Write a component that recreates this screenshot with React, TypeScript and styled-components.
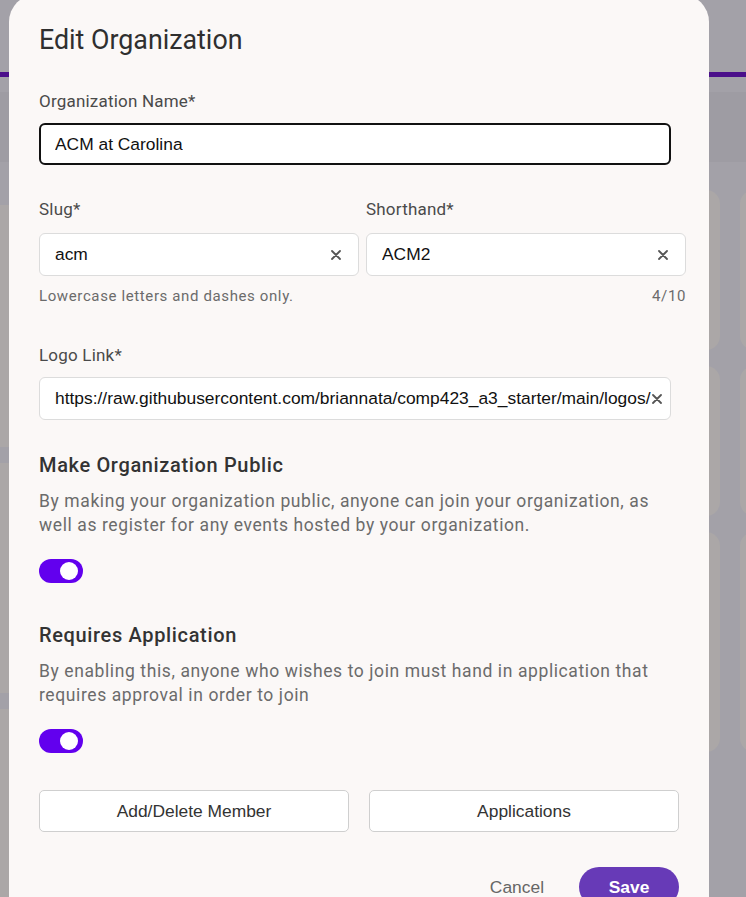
import React from 'react';
import styled, { createGlobalStyle } from 'styled-components';

const GlobalStyle = createGlobalStyle`
  html, body {
    margin: 0;
    padding: 0;
    background: #a3a1a8;
    overflow: hidden;
  }
  * {
    box-sizing: border-box;
  }
`;

/* dimmed page that sits behind the dialog */
const Backdrop = styled.div`
  width: 746px;
  height: 897px;
  overflow: hidden;
  background: #a3a1a8;
`;

const TopBar = styled.div`
  height: 77px;
  border-bottom: 5px solid #4b0f8a;
`;

const Spacer = styled.div`
  height: 15px;
`;

const Band = styled.div`
  height: 70px;
  background: #9e9ca3;
`;

const CardColumns = styled.div`
  display: flex;
  gap: 20px;
  margin-left: -40px;
  align-items: flex-start;
`;

const CardColumn = styled.div<{ $top: number }>`
  width: 370px;
  flex-shrink: 0;
  display: flex;
  flex-direction: column;
  gap: 16px;
  padding-top: ${({ $top }) => $top}px;
`;

const BgCard = styled.div<{ $h: number }>`
  height: ${({ $h }) => $h}px;
  background: #aba7a7;
  border-radius: 14px;
`;

/* modal layer */
const Overlay = styled.div`
  position: fixed;
  inset: 0;
  display: flex;
  align-items: flex-start;
  padding-left: 9px;
`;

const Dialog = styled.div`
  width: 700px;
  margin-top: -6px;
  background: #fbf8f7;
  border-radius: 28px;
  padding: 30px 0 40px 30px;
  font-family: Roboto, 'Noto Sans', Arial, sans-serif;
`;

const Title = styled.h2`
  margin: 0;
  font-size: 26.8px;
  line-height: 32px;
  font-weight: 400;
  color: #2f2f2f;
`;

const Label = styled.div<{ $mt: number }>`
  margin-top: ${({ $mt }) => $mt}px;
  font-size: 17px;
  line-height: 20px;
  letter-spacing: 0.2px;
  color: #4a4a4a;
`;

const InputBox = styled.div<{ $focused?: boolean; $width: number; $mt: number }>`
  position: relative;
  display: flex;
  align-items: center;
  width: ${({ $width }) => $width}px;
  height: ${({ $focused }) => ($focused ? 42 : 43)}px;
  margin-top: ${({ $mt }) => $mt}px;
  background: #fff;
  border: ${({ $focused }) => ($focused ? '2px solid #111' : '1px solid #dcdcdc')};
  border-radius: 6px;
  padding: ${({ $focused }) => ($focused ? '0 14px' : '0 7px 0 15px')};
  overflow: hidden;
`;

const InputText = styled.span`
  font-family: 'Liberation Sans', Arial, sans-serif;
  font-size: 17.4px;
  color: #111;
  white-space: nowrap;
  overflow: hidden;
`;

const ClearButton = styled.span<{ $right: number }>`
  position: absolute;
  right: ${({ $right }) => $right}px;
  top: 50%;
  width: 10px;
  height: 10px;
  margin-top: -5px;
  display: flex;
`;

const FieldRow = styled.div`
  display: grid;
  grid-template-columns: 320px 320px;
  column-gap: 7px;
  margin-top: 34px;
`;

const Hint = styled.div<{ $align?: string }>`
  margin-top: 12px;
  font-size: 15px;
  line-height: 16px;
  letter-spacing: 0.62px;
  color: #6b6b6b;
  text-align: ${({ $align }) => $align || 'left'};
`;

const SectionTitle = styled.div<{ $mt: number }>`
  margin-top: ${({ $mt }) => $mt}px;
  font-size: 20px;
  line-height: 24px;
  font-weight: 500;
  letter-spacing: 0.65px;
  color: #333;
`;

const Description = styled.p`
  margin: 12px 0 0;
  width: 647px;
  font-size: 17.5px;
  line-height: 24px;
  letter-spacing: 0.6px;
  color: #6b6b6b;
`;

const Toggle = styled.div`
  margin-top: 22px;
  width: 44px;
  height: 24px;
  border-radius: 12px;
  background: #6200ee;
  display: flex;
  align-items: center;
  justify-content: flex-end;
  padding-right: 5px;
`;

const Knob = styled.div`
  width: 18px;
  height: 18px;
  border-radius: 50%;
  background: #fff;
`;

const ButtonRow = styled.div`
  display: grid;
  grid-template-columns: 310px 310px;
  column-gap: 20px;
  margin-top: 37px;
`;

const OutlineButton = styled.button`
  height: 42px;
  background: #fff;
  border: 1px solid #cfcfcf;
  border-radius: 5px;
  font-family: 'Liberation Sans', Arial, sans-serif;
  font-size: 17.4px;
  color: #333;
  cursor: pointer;
`;

const Footer = styled.div`
  width: 640px;
  margin-top: 35px;
  display: flex;
  justify-content: flex-end;
  align-items: center;
  gap: 17px;
`;

const TextButton = styled.button`
  background: none;
  border: none;
  padding: 0 18px;
  height: 40px;
  font-family: 'Liberation Sans', Arial, sans-serif;
  font-size: 17.4px;
  color: #666;
  cursor: pointer;
`;

const PrimaryButton = styled.button`
  width: 100px;
  height: 40px;
  border: none;
  border-radius: 20px;
  background: #673ab7;
  color: #fff;
  font-family: 'Liberation Sans', Arial, sans-serif;
  font-size: 17.4px;
  font-weight: 700;
  cursor: pointer;
`;

function ClearIcon({ right }: { right: number }) {
  return (
    <ClearButton $right={right}>
      <svg width="10" height="10" viewBox="0 0 10 10">
        <path d="M1 1 L9 9 M9 1 L1 9" stroke="#555" strokeWidth="1.8" strokeLinecap="round" />
      </svg>
    </ClearButton>
  );
}

export default function App() {
  return (
    <>
      <GlobalStyle />
      <Backdrop>
        <TopBar />
        <Spacer />
        <Band />
        <CardColumns>
          <CardColumn $top={43}>
            <BgCard $h={242} />
            <BgCard $h={230} />
            <BgCard $h={220} />
          </CardColumn>
          <CardColumn $top={28}>
            <BgCard $h={160} />
            <BgCard $h={150} />
            <BgCard $h={220} />
          </CardColumn>
          <CardColumn $top={28}>
            <BgCard $h={160} />
            <BgCard $h={150} />
            <BgCard $h={220} />
          </CardColumn>
        </CardColumns>
      </Backdrop>

      <Overlay>
        <Dialog>
          <Title>Edit Organization</Title>

          <Label $mt={35}>Organization Name*</Label>
          <InputBox $focused $width={632} $mt={12}>
            <InputText>ACM at Carolina</InputText>
          </InputBox>

          <FieldRow>
            <div>
              <Label $mt={0}>Slug*</Label>
              <InputBox $width={320} $mt={14}>
                <InputText>acm</InputText>
                <ClearIcon right={17} />
              </InputBox>
              <Hint>Lowercase letters and dashes only.</Hint>
            </div>
            <div>
              <Label $mt={0}>Shorthand*</Label>
              <InputBox $width={320} $mt={14}>
                <InputText>ACM2</InputText>
                <ClearIcon right={17} />
              </InputBox>
              <Hint $align="right">4/10</Hint>
            </div>
          </FieldRow>

          <Label $mt={41}>Logo Link*</Label>
          <InputBox $width={632} $mt={12}>
            <InputText>https://raw.githubusercontent.com/briannata/comp423_a3_starter/main/logos/</InputText>
            <ClearIcon right={8} />
          </InputBox>

          <SectionTitle $mt={33}>Make Organization Public</SectionTitle>
          <Description>
            By making your organization public, anyone can join your organization, as well as register for any events
            hosted by your organization.
          </Description>
          <Toggle>
            <Knob />
          </Toggle>

          <SectionTitle $mt={40}>Requires Application</SectionTitle>
          <Description>
            By enabling this, anyone who wishes to join must hand in application that requires approval in order to join
          </Description>
          <Toggle>
            <Knob />
          </Toggle>

          <ButtonRow>
            <OutlineButton>Add/Delete Member</OutlineButton>
            <OutlineButton>Applications</OutlineButton>
          </ButtonRow>

          <Footer>
            <TextButton>Cancel</TextButton>
            <PrimaryButton>Save</PrimaryButton>
          </Footer>
        </Dialog>
      </Overlay>
    </>
  );
}
